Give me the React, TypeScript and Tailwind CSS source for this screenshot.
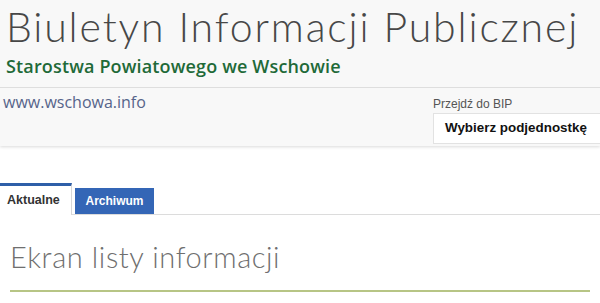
import React from "react";

export default function App() {
  return (
    <div className="w-[600px] h-[303px] overflow-hidden bg-white" style={{ fontFamily: "'Open Sans', sans-serif" }}>
      <div className="bg-[#f8f8f8] shadow-[0_1px_3px_rgba(0,0,0,0.15)]">
        <div className="h-[88px] border-b border-[#dedede] pl-[6px] pt-[3px]">
          <div className="text-[41px] leading-[48px] font-light text-[#474747] tracking-[1.85px]" style={{ fontFamily: "Lato, sans-serif" }}>
            Biuletyn Informacji Publicznej
          </div>
          <div className="text-[18px] leading-[22px] font-semibold text-[#1f6a38] mt-[4px] tracking-[0.15px]">
            Starostwa Powiatowego we Wschowie
          </div>
        </div>
        <div className="h-[58px] flex justify-between">
          <div className="pl-[3px] pt-[4px] text-[16px] leading-[20px] text-[#56648a]">www.wschowa.info</div>
          <div className="w-[167px] pt-[8px]">
            <div className="text-[12px] leading-[16px] text-[#555]" style={{ fontFamily: "'Liberation Sans', Arial, sans-serif" }}>
              Przejdź do BIP
            </div>
            <div className="mt-[1px] h-[31px] bg-white border border-[#e2e2e2] border-r-0 flex items-center pl-[11px] text-[13.4px] font-bold text-[#111]" style={{ fontFamily: "'Liberation Sans', Arial, sans-serif" }}>
              Wybierz podjednostkę
            </div>
          </div>
        </div>
      </div>
      <div className="mt-[37px] flex items-end border-b border-[#dcdcdc]" style={{ fontFamily: "'Liberation Sans', Arial, sans-serif" }}>
        <div className="w-[72px] h-[32px] border-t-[3px] border-t-[#2f5fa8] border-r border-[#d8d8d8] bg-white -mb-px flex items-center pl-[7px] text-[12.5px] font-bold text-[#333]">
          Aktualne
        </div>
        <div className="ml-[3px] w-[79px] h-[26px] bg-[#3466b6] flex items-center justify-center text-[12px] font-bold text-white">
          Archiwum
        </div>
      </div>
      <div className="mx-[10px] mt-[24px] pb-[15px] border-b-2 border-[#b7c585] text-[29px] leading-[36px] font-light text-[#6f6f6f] tracking-[0.6px]" style={{ fontFamily: "Lato, sans-serif" }}>
        Ekran listy informacji
      </div>
    </div>
  );
}
